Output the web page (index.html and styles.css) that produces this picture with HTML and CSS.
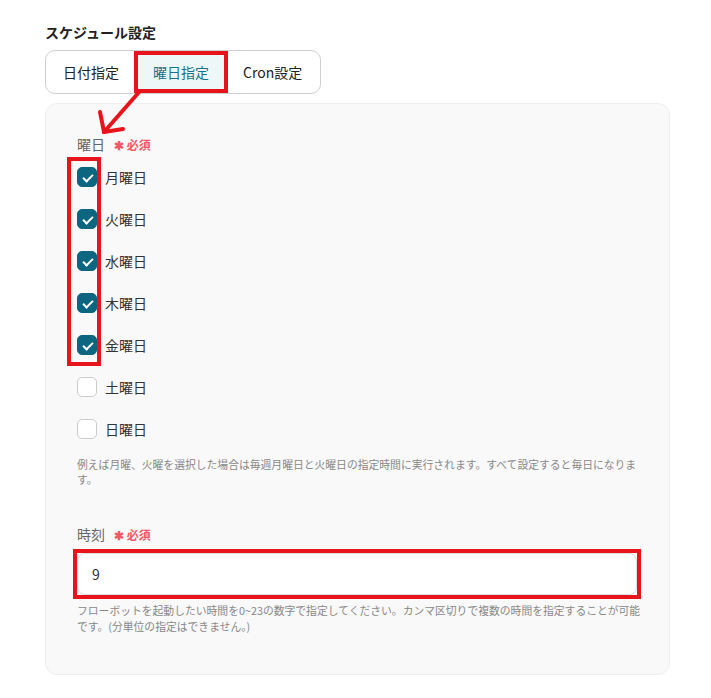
FILE: index.html
```html
<!DOCTYPE html>
<html lang="ja">
<head>
    <meta charset="UTF-8">
    <meta name="viewport" content="width=device-width, initial-scale=1.0">
    <title>スケジュール設定</title>
    <link rel="stylesheet" href="styles.css">
</head>
<body>
    <div class="page">
        <h2 class="title">スケジュール設定</h2>

        <div class="tabs">
            <div class="tab">日付指定</div>
            <div class="tab active">曜日指定</div>
            <div class="tab">Cron設定</div>
        </div>

        <div class="panel">
            <div class="field-label">曜日 <span class="required">✱ 必須</span></div>
            <div class="days">
                <label class="day"><span class="box checked"></span>月曜日</label>
                <label class="day"><span class="box checked"></span>火曜日</label>
                <label class="day"><span class="box checked"></span>水曜日</label>
                <label class="day"><span class="box checked"></span>木曜日</label>
                <label class="day"><span class="box checked"></span>金曜日</label>
                <label class="day"><span class="box"></span>土曜日</label>
                <label class="day"><span class="box"></span>日曜日</label>
            </div>
            <p class="help">例えば月曜、火曜を選択した場合は毎週月曜日と火曜日の指定時間に実行されます。すべて設定すると毎日になります。</p>

            <div class="field-label time-label">時刻 <span class="required">✱ 必須</span></div>
            <div class="time-input">9</div>
            <p class="help">フローボットを起動したい時間を0~23の数字で指定してください。カンマ区切りで複数の時間を指定することが可能です。(分単位の指定はできません。)</p>

            <div class="mark-days"></div>
        </div>

        <svg class="arrow" width="711" height="698" viewBox="0 0 711 698">
            <g stroke="#e8141c" stroke-width="4" stroke-linecap="round" fill="none">
                <path d="M140 91 L104 132"/>
                <path d="M104 132 L100 112"/>
                <path d="M104 132 L123 129"/>
            </g>
        </svg>
    </div>
</body>
</html>
```

FILE: styles.css
```css
* {
    margin: 0;
    padding: 0;
    box-sizing: border-box;
}

body {
    font-family: "Noto Sans CJK JP", "Noto Sans", sans-serif;
    background: #fff;
    color: #333;
}

.page {
    position: relative;
    width: 711px;
    height: 698px;
    padding: 22px 0 0 45px;
}

.title {
    font-size: 14px;
    line-height: 20px;
    font-weight: bold;
    color: #222;
    margin-bottom: 8px;
}

.tabs {
    display: inline-flex;
    gap: 4px;
    padding: 4px 3px 4px 2px;
    border: 1px solid #cfcfcf;
    border-radius: 10px;
    background: #fff;
}

.tab {
    height: 34px;
    line-height: 34px;
    padding: 0 15px;
    font-size: 14px;
    color: #222;
    border-radius: 4px;
}

.tab.active {
    position: relative;
    background: #eef7f8;
    color: #1b6f87;
}

.tab.active::after {
    content: "";
    position: absolute;
    inset: -4px;
    border: 4px solid #e8141c;
}

.panel {
    position: relative;
    width: 625px;
    margin-top: 9px;
    padding: 30px 30px 40px 31px;
    background: #f9f9f9;
    border: 1px solid #eeeeee;
    border-radius: 12px;
}

.field-label {
    font-size: 14px;
    line-height: 20px;
    color: #666;
    margin-bottom: 1px;
}

.required {
    margin-left: 6px;
    font-size: 12px;
    font-weight: bold;
    color: #f25767;
}

.time-label {
    margin-top: 37px;
    margin-bottom: 8px;
}

.days {
    display: flex;
    flex-direction: column;
}

.day {
    display: flex;
    align-items: center;
    gap: 8px;
    height: 42px;
    font-size: 14px;
    color: #333;
}

.box {
    width: 20px;
    height: 20px;
    border: 1px solid #cccccc;
    border-radius: 5px;
    background: #fff;
    position: relative;
}

.box.checked {
    background: #0d6680;
    border-color: #0d6680;
}

.box.checked::after {
    content: "";
    position: absolute;
    left: 7px;
    top: 4px;
    width: 4px;
    height: 8px;
    border: solid #fff;
    border-width: 0 2.5px 2.5px 0;
    transform: rotate(45deg);
}

.help {
    width: 566px;
    margin-top: 7px;
    font-size: 10.8px;
    line-height: 15px;
    color: #888;
}

.time-input {
    position: relative;
    width: 560px;
    height: 42px;
    line-height: 40px;
    padding-left: 14px;
    font-size: 14px;
    color: #333;
    background: #fff;
    border: 1px solid #dddddd;
    border-radius: 8px;
}

.time-input::after {
    content: "";
    position: absolute;
    inset: -5px;
    border: 4px solid #e8141c;
}

.time-input + .help {
    margin-top: 7px;
    line-height: 16px;
}

.mark-days {
    position: absolute;
    left: 21px;
    top: 53px;
    width: 34px;
    height: 209px;
    border: 4px solid #e8141c;
}

.arrow {
    position: absolute;
    left: 0;
    top: 0;
    pointer-events: none;
}
```
